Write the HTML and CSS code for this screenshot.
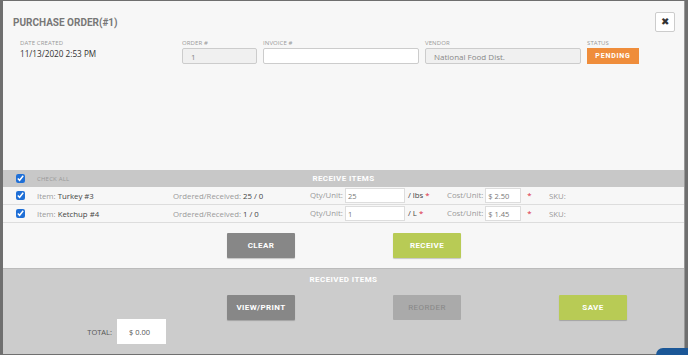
FILE: index.html
```html
<!DOCTYPE html>
<html lang="en">
<head>
  <meta charset="UTF-8">
  <meta name="viewport" content="width=device-width, initial-scale=1.0">
  <title>Purchase Order</title>
  <link rel="stylesheet" href="styles.css">
</head>
<body>
  <div class="modal">
    <div class="modal-header">
      <h1>Purchase Order(#1)</h1>
      <button class="close">&#x2716;</button>
    </div>

    <div class="fields">
      <div class="field date">
        <label>Date Created</label>
        <span class="value">11/13/2020 2:53 PM</span>
      </div>
      <div class="field order">
        <label>Order #</label>
        <input type="text" value="1" readonly>
      </div>
      <div class="field invoice">
        <label>Invoice #</label>
        <input type="text" value="">
      </div>
      <div class="field vendor">
        <label>Vendor</label>
        <input type="text" value="National Food Dist." readonly>
      </div>
      <div class="field status">
        <label>Status</label>
        <span class="badge">Pending</span>
      </div>
    </div>

    <div class="receive">
      <div class="receive-header">
        <span class="check"><input type="checkbox" checked></span>
        <span class="check-all">Check All</span>
        <span class="section-title">Receive Items</span>
      </div>
      <div class="item-row">
        <span class="check"><input type="checkbox" checked></span>
        <span class="cell">Item: <b>Turkey #3</b></span>
        <span class="cell">Ordered/Received: <b>25 / 0</b></span>
        <span class="cell qty">Qty/Unit: <input type="text" value="25"> <b>/ lbs</b> <i>*</i></span>
        <span class="cell cost">Cost/Unit: <input type="text" value="$ 2.50"> <i>*</i></span>
        <span class="cell">SKU:</span>
      </div>
      <div class="item-row">
        <span class="check"><input type="checkbox" checked></span>
        <span class="cell">Item: <b>Ketchup #4</b></span>
        <span class="cell">Ordered/Received: <b>1 / 0</b></span>
        <span class="cell qty">Qty/Unit: <input type="text" value="1"> <b>/ L</b> <i>*</i></span>
        <span class="cell cost">Cost/Unit: <input type="text" value="$ 1.45"> <i>*</i></span>
        <span class="cell">SKU:</span>
      </div>
      <div class="actions">
        <button class="btn gray col2">Clear</button>
        <button class="btn green col3">Receive</button>
      </div>
    </div>

    <div class="received">
      <div class="section-title">Received Items</div>
      <div class="actions bottom">
        <button class="btn gray col2">View/Print</button>
        <button class="btn disabled col3">Reorder</button>
        <button class="btn green col4">Save</button>
        <div class="total col1">
          <span>Total:</span>
          <input type="text" value="$ 0.00">
        </div>
      </div>
    </div>
  </div>

  <div class="chat-tab"></div>
</body>
</html>
```

FILE: styles.css
```css
body {
  margin: 0;
  height: 355px;
  background: #6f6f6f;
  font-family: 'Open Sans', sans-serif;
  overflow: hidden;
  padding: 1px 3px 0 3px;
  box-sizing: border-box;
}
.modal {
  background: #f7f7f7;
  height: 349px;
  display: flex;
  flex-direction: column;
  border-right: 1px solid #999;
}
.modal-header {
  display: flex;
  justify-content: space-between;
  align-items: center;
  padding: 11px 9px 0 10px;
}
.modal-header h1 {
  margin: 0;
  font-family: 'Roboto', sans-serif;
  font-size: 10px;
  font-weight: bold;
  letter-spacing: 0;
  text-transform: uppercase;
  color: #777;
}
.close {
  width: 20px;
  height: 20px;
  padding: 0;
  background: #fff;
  border: 1px solid #ccc;
  border-radius: 2px;
  color: #333;
  font-size: 10px;
  line-height: 18px;
  text-align: center;
}
.fields {
  display: flex;
  gap: 6px;
  padding: 0 0 0 17px;
  margin-top: 7px;
}
.field {
  display: flex;
  flex-direction: column;
}
.field label {
  font-size: 6px;
  text-transform: uppercase;
  color: #999;
  height: 9px;
  letter-spacing: 0.1px;
}
.field.date { width: 156px; }
.field.order { width: 75px; }
.field.invoice,
.field.vendor { width: 156px; }
.value {
  font-size: 8.2px;
  color: #333;
}
.field input {
  box-sizing: border-box;
  height: 16px;
  border: 1px solid #ccc;
  border-radius: 2px;
  font-family: 'Open Sans', sans-serif;
  font-size: 8px;
  padding: 0 8px;
  color: #888;
  background: #f0f0f0;
}
.field.invoice input { background: #fff; }
.badge {
  display: block;
  height: 16px;
  width: 52px;
  line-height: 16px;
  text-align: center;
  background: #ef8d3b;
  color: #fff;
  font-family: 'Roboto', sans-serif;
  font-weight: bold;
  font-size: 7px;
  letter-spacing: 0.8px;
  text-transform: uppercase;
}
.receive {
  margin-top: 106px;
}
.receive-header {
  position: relative;
  display: flex;
  align-items: center;
  height: 17px;
  background: #c8c8c8;
}
.check {
  width: 34px;
  display: flex;
  justify-content: center;
}
.check input {
  width: 9px;
  height: 9px;
  margin: 0;
  accent-color: #1f6fd6;
}
.check-all {
  font-size: 6px;
  color: #999;
  text-transform: uppercase;
  letter-spacing: 0.2px;
}
.section-title {
  font-family: 'Roboto', sans-serif;
  font-weight: bold;
  font-size: 8px;
  color: #fff;
  text-transform: uppercase;
  letter-spacing: 0.4px;
}
.receive-header .section-title {
  position: absolute;
  left: 0;
  right: 0;
  text-align: center;
  pointer-events: none;
}
.item-row {
  display: grid;
  grid-template-columns: 34px 136px 137px 137px 102px 1fr;
  align-items: center;
  height: 17px;
  border-bottom: 1px solid #ddd;
  font-size: 7.8px;
  color: #999;
}
.item-row:last-of-type {
  border-bottom: 1px solid #ccc;
}
.item-row b {
  font-weight: normal;
  color: #444;
}
.item-row i {
  font-style: normal;
  color: #d9263a;
}
.cell input {
  box-sizing: border-box;
  height: 15px;
  border: 1px solid #ddd;
  background: #fff;
  font-family: 'Open Sans', sans-serif;
  font-size: 7.5px;
  color: #777;
  padding: 0 2px;
  vertical-align: middle;
}
.qty input { width: 60px; margin-left: 0; }
.cost input { width: 36px; margin-right: 4px; }
.qty b { margin-left: 1px; }
.actions {
  display: grid;
  grid-template-columns: repeat(4, 166px);
  padding: 10px 0 10px 9px;
}
.col1 { grid-column: 1; }
.col2 { grid-column: 2; }
.col3 { grid-column: 3; }
.col4 { grid-column: 4; }
.btn {
  justify-self: center;
  width: 68px;
  height: 25px;
  border: none;
  border-radius: 1px;
  font-family: 'Roboto', sans-serif;
  font-weight: bold;
  font-size: 8px;
  letter-spacing: 0.4px;
  text-transform: uppercase;
  color: #fff;
  box-shadow: 0 1px 1px rgba(0, 0, 0, 0.2);
}
.btn.gray { background: #878787; }
.btn.green { background: #b8cb55; }
.btn.disabled { background: #aaa; color: #888; font-weight: normal; box-shadow: none; }
.received {
  flex: 1;
  background: #cccccc;
  border-top: 1px solid #bbb;
}
.received .section-title {
  text-align: center;
  padding-top: 6px;
}
.actions.bottom {
  padding-top: 11px;
  row-gap: 0;
}
.total {
  grid-row: 2;
  justify-self: end;
  display: flex;
  align-items: center;
  gap: 5px;
  margin-right: 12px;
  margin-top: -1px;
  font-size: 7.5px;
  color: #555;
  text-transform: uppercase;
}
.total input {
  box-sizing: border-box;
  width: 49px;
  height: 25px;
  border: none;
  background: #fff;
  font-family: 'Open Sans', sans-serif;
  font-size: 7.5px;
  color: #555;
  padding: 0 0 0 12px;
}
.chat-tab {
  position: absolute;
  right: 0;
  bottom: 0;
  width: 32px;
  height: 7px;
  background: #1b5797;
  border-top-left-radius: 8px;
}
```
